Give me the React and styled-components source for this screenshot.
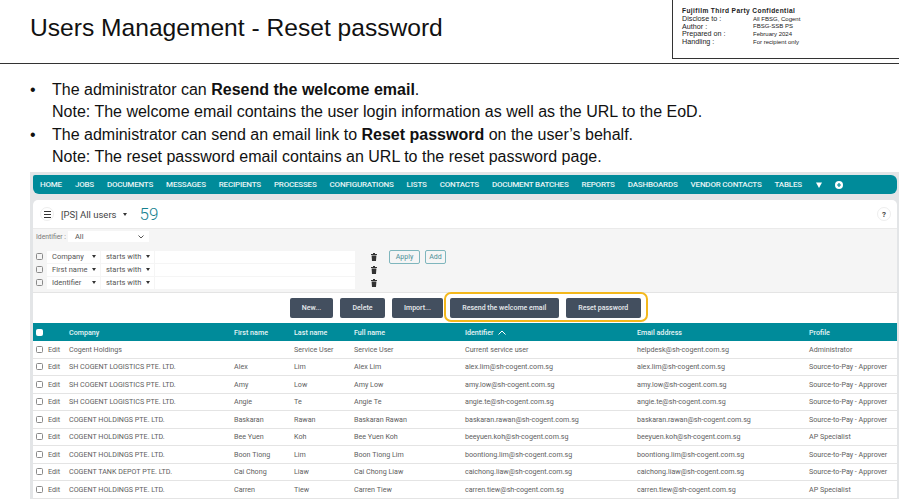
//dependencies
import React from 'react';
import styled, { createGlobalStyle } from 'styled-components';

const GlobalStyle = createGlobalStyle`
  html, body {
    margin: 0;
    padding: 0;
    height: 499px;
    overflow: hidden;
    background: #ffffff;
    font-family: "Liberation Sans", Arial, sans-serif;
  }
`;

const Slide = styled.div`
  width: 899px;
  height: 499px;
  overflow: hidden;
`;

const Header = styled.header`
  height: 63px;
  display: flex;
  justify-content: space-between;
  border-bottom: 1px solid #333;
`;

const Title = styled.h1`
  margin: 0;
  padding: 14px 0 0 30px;
  font-size: 24.6px;
  line-height: 28px;
  font-weight: 400;
  color: #111;
`;

const Confidential = styled.div`
  width: 227px;
  height: 59px;
  box-sizing: border-box;
  padding: 7px 0 0 9px;
  border-left: 1px solid #333;
  border-bottom: 1px solid #333;
  color: #222;
`;

const ConfTitle = styled.div`
  font-weight: 700;
  font-size: 6.6px;
  line-height: 7px;
  letter-spacing: 0.4px;
`;

const ConfRow = styled.div`
  display: grid;
  grid-template-columns: 71px 1fr;
  align-items: center;
  height: 7.7px;
  font-size: 7.2px;
`;

const ConfValue = styled.span`
  font-size: 6px;
`;

const Bullets = styled.ul`
  margin: 0;
  padding: 15px 0 0 30px;
  list-style: none;
  height: 108px;
  box-sizing: border-box;
`;

const Bullet = styled.li`
  display: grid;
  grid-template-columns: 22px 1fr;
  font-size: 16px;
  line-height: 22.4px;
  color: #111;
`;

const Panel = styled.section`
  position: relative;
  margin-left: 30px;
  height: 327px;
  padding: 3px 2px 0 3px;
  background: #e3e5e7;
`;

const Nav = styled.nav`
  height: 19px;
  display: flex;
  align-items: center;
  gap: 13px;
  padding-left: 7px;
  background: #008b9a;
  border-radius: 2px 6px 6px 6px;
  font-family: Roboto, sans-serif;
  font-size: 8px;
  font-weight: 500;
  letter-spacing: -0.2px;
  color: #e6f4f5;
  white-space: nowrap;
`;

const NavIcon = styled.svg`
  flex: none;
  margin-left: ${props => props.$ml}px;
`;

const ViewBar = styled.div`
  margin-top: 6px;
  height: 28px;
  display: flex;
  align-items: center;
  background: #fff;
  border-radius: 5px 5px 0 0;
  padding: 0 6px 0 7px;
  font-family: Roboto, sans-serif;
`;

const RoundButton = styled.span`
  width: 14px;
  height: 14px;
  box-sizing: border-box;
  border-radius: 50%;
  border: 1px solid #eee;
  display: flex;
  align-items: center;
  justify-content: center;
  font-size: 8px;
  font-weight: 700;
  color: #444;
`;

const ViewName = styled.span`
  margin-left: 7px;
  font-size: 9.5px;
  color: #444;
`;

const Caret = styled.span`
  flex: none;
  margin-left: ${props => props.$ml || 0}px;
  width: 0;
  height: 0;
  border-left: 2.5px solid transparent;
  border-right: 2.5px solid transparent;
  border-top: 3px solid #333;
`;

const Count = styled.span`
  margin-left: 13px;
  font-size: 17px;
  font-weight: 300;
  color: #14808e;
`;

const Help = styled(RoundButton)`
  margin-left: auto;
`;

const Filters = styled.div`
  height: 65px;
  box-sizing: border-box;
  background: #f5f5f5;
  border-top: 1px solid #eaeaea;
  border-bottom: 1px solid #e4e4e4;
  padding: 2px 0 0 3px;
  font-family: Roboto, sans-serif;
  font-size: 7.5px;
  color: #555;
`;

const IdentifierRow = styled.div`
  display: flex;
  align-items: center;
  height: 11px;
  font-size: 6.8px;
  color: #777;
`;

const IdentifierSelect = styled.span`
  width: 81px;
  height: 11px;
  margin-left: 2px;
  padding: 0 5px 0 7px;
  box-sizing: border-box;
  display: flex;
  align-items: center;
  justify-content: space-between;
  background: #fff;
  font-size: 7.5px;
  color: #555;
`;

const FilterArea = styled.div`
  margin-top: 9px;
  display: flex;
  align-items: flex-start;
`;

const FilterRows = styled.div`
  display: flex;
  flex-direction: column;
  gap: 1.5px;
`;

const FilterRow = styled.div`
  height: 11.5px;
  display: flex;
  align-items: center;
`;

const Check = styled.span`
  width: 7px;
  height: 7px;
  box-sizing: border-box;
  flex: none;
  border: 1px solid ${props => (props.$filled ? '#fff' : '#8a8a8a')};
  border-radius: 1.5px;
  background: ${props => (props.$filled ? '#fff' : 'transparent')};
`;

const FilterSelect = styled.span`
  width: 53px;
  height: 100%;
  margin-left: ${props => props.$ml}px;
  padding: 0 4px 0 5px;
  box-sizing: border-box;
  display: flex;
  align-items: center;
  justify-content: space-between;
  white-space: nowrap;
  background: #fff;
`;

const FilterInput = styled.span`
  width: 200px;
  height: 100%;
  margin-left: 1px;
  background: #fff;
`;

const TrashIcons = styled.div`
  margin-left: 16px;
  display: flex;
  flex-direction: column;
  gap: 1.5px;
`;

const TrashSlot = styled.span`
  height: 11.5px;
  display: flex;
  align-items: center;
`;

const OutlineButton = styled.span`
  margin: -1px 0 0 ${props => props.$ml}px;
  width: ${props => props.$w}px;
  height: 14px;
  box-sizing: border-box;
  display: flex;
  align-items: center;
  justify-content: center;
  border: 1px solid #7fb6bd;
  border-radius: 2px;
  color: #4d8f98;
  font-size: 7px;
`;

const Actions = styled.div`
  height: 30px;
  box-sizing: border-box;
  background: #fff;
  display: flex;
  align-items: center;
  padding-left: 257px;
  gap: 7px;
`;

const ActionButton = styled.span`
  height: 19.5px;
  width: ${props => props.$w}px;
  display: flex;
  align-items: center;
  justify-content: center;
  border-radius: 2px;
  background: #434f5f;
  color: #e8ebee;
  font-family: Roboto, sans-serif;
  font-size: 7px;
  font-weight: 500;
`;

const Highlight = styled.div`
  position: absolute;
  left: 414px;
  top: 120px;
  width: 204px;
  height: 30px;
  box-sizing: border-box;
  border: 2.5px solid #f4b81c;
  border-radius: 7px;
`;

const Table = styled.div`
  font-family: Roboto, sans-serif;
  font-size: 7.15px;
  color: #606060;
`;

const columns = '12px 21px 165px 60px 60px 111px 172px 172px 1fr';

const HeadRow = styled.div`
  height: 18px;
  display: grid;
  grid-template-columns: ${columns};
  align-items: center;
  background: #008b9a;
  color: #e6f4f5;
  font-weight: 500;
  padding-left: 3px;
`;

const Row = styled.div`
  height: 17.5px;
  box-sizing: border-box;
  display: grid;
  grid-template-columns: ${columns};
  align-items: center;
  background: #fff;
  border-bottom: 1px solid #e4e4e4;
  padding-left: 3px;
  white-space: nowrap;
`;

const SortArrow = styled.svg`
  width: 8px;
  height: 5px;
  margin-left: 4px;
`;

const Hamburger = () => (
  <svg width="7" height="7" viewBox="0 0 7 7">
    <path d="M0 .5h7M0 3.5h7M0 6.5h7" stroke="#333" strokeWidth="1" />
  </svg>
);

const Trash = () => (
  <svg width="6" height="8" viewBox="0 0 6 8">
    <path d="M2 0h2v1h2v1H0V1h2zM.6 2.5h4.8L5 8H1z" fill="#333" />
  </svg>
);

const Chevron = () => (
  <svg width="6" height="4" viewBox="0 0 6 4">
    <path d="M.5.5 3 3 5.5.5" fill="none" stroke="#555" />
  </svg>
);

const navItems = ['HOME', 'JOBS', 'DOCUMENTS', 'MESSAGES', 'RECIPIENTS', 'PROCESSES', 'CONFIGURATIONS', 'LISTS', 'CONTACTS', 'DOCUMENT BATCHES', 'REPORTS', 'DASHBOARDS', 'VENDOR CONTACTS', 'TABLES'];

const filters = ['Company', 'First name', 'Identifier'];

const S2P = 'Source-to-Pay - Approver';
const SH = 'SH COGENT LOGISTICS PTE. LTD.';
const CH = 'COGENT HOLDINGS PTE. LTD.';

const users = [
  ['Cogent Holdings', '', 'Service User', 'Service User', 'Current service user', 'helpdesk@sh-cogent.com.sg', 'Administrator'],
  [SH, 'Alex', 'Lim', 'Alex Lim', 'alex.lim@sh-cogent.com.sg', 'alex.lim@sh-cogent.com.sg', S2P],
  [SH, 'Amy', 'Low', 'Amy Low', 'amy.low@sh-cogent.com.sg', 'amy.low@sh-cogent.com.sg', S2P],
  [SH, 'Angie', 'Te', 'Angie Te', 'angie.te@sh-cogent.com.sg', 'angie.te@sh-cogent.com.sg', S2P],
  [CH, 'Baskaran', 'Rawan', 'Baskaran Rawan', 'baskaran.rawan@sh-cogent.com.sg', 'baskaran.rawan@sh-cogent.com.sg', S2P],
  [CH, 'Bee Yuen', 'Koh', 'Bee Yuen Koh', 'beeyuen.koh@sh-cogent.com.sg', 'beeyuen.koh@sh-cogent.com.sg', 'AP Specialist'],
  [CH, 'Boon Tiong', 'Lim', 'Boon Tiong Lim', 'boontiong.lim@sh-cogent.com.sg', 'boontiong.lim@sh-cogent.com.sg', S2P],
  ['COGENT TANK DEPOT PTE. LTD.', 'Cai Chong', 'Liaw', 'Cai Chong Liaw', 'caichong.liaw@sh-cogent.com.sg', 'caichong.liaw@sh-cogent.com.sg', S2P],
  [CH, 'Carren', 'Tiew', 'Carren Tiew', 'carren.tiew@sh-cogent.com.sg', 'carren.tiew@sh-cogent.com.sg', 'AP Specialist'],
];

const App = () => (
  <Slide>
    <GlobalStyle />
    <Header>
      <Title>Users Management - Reset password</Title>
      <Confidential>
        <ConfTitle>Fujifilm Third Party Confidential</ConfTitle>
        <ConfRow><span>Disclose to :</span><ConfValue>All FBSG, Cogent</ConfValue></ConfRow>
        <ConfRow><span>Author :</span><ConfValue>FBSG-SSB PS</ConfValue></ConfRow>
        <ConfRow><span>Prepared on :</span><ConfValue>February 2024</ConfValue></ConfRow>
        <ConfRow><span>Handling :</span><ConfValue>For recipient only</ConfValue></ConfRow>
      </Confidential>
    </Header>
    <Bullets>
      <Bullet>
        <span>•</span>
        <span>The administrator can <b>Resend the welcome email</b>.<br />Note: The welcome email contains the user login information as well as the URL to the EoD.</span>
      </Bullet>
      <Bullet>
        <span>•</span>
        <span>The administrator can send an email link to <b>Reset password</b> on the user’s behalf.<br />Note: The reset password email contains an URL to the reset password page.</span>
      </Bullet>
    </Bullets>
    <Panel>
      <Nav>
        {navItems.map(item => <span key={item}>{item}</span>)}
        <NavIcon $ml={1} width="6" height="6" viewBox="0 0 6 6"><path d="M0 .5h6L3 6z" fill="#fff" /></NavIcon>
        <NavIcon $ml={0} width="8" height="8" viewBox="0 0 8 8"><circle cx="4" cy="4" r="4" fill="#fff" /><path d="M4 2v4M2 4h4" stroke="#008b9a" strokeWidth="1.2" /></NavIcon>
      </Nav>
      <ViewBar>
        <RoundButton><Hamburger /></RoundButton>
        <ViewName>[PS] All users</ViewName>
        <Caret $ml={6} />
        <Count>59</Count>
        <Help>?</Help>
      </ViewBar>
      <Filters>
        <IdentifierRow>
          Identifier :
          <IdentifierSelect>All <Chevron /></IdentifierSelect>
        </IdentifierRow>
        <FilterArea>
          <FilterRows>
            {filters.map(name => (
              <FilterRow key={name}>
                <Check />
                <FilterSelect $ml={4}>{name}<Caret /></FilterSelect>
                <FilterSelect $ml={1}>starts with<Caret /></FilterSelect>
                <FilterInput />
              </FilterRow>
            ))}
          </FilterRows>
          <TrashIcons>
            {filters.map(name => <TrashSlot key={name}><Trash /></TrashSlot>)}
          </TrashIcons>
          <OutlineButton $ml={12} $w={31}>Apply</OutlineButton>
          <OutlineButton $ml={5} $w={21}>Add</OutlineButton>
        </FilterArea>
      </Filters>
      <Actions>
        <ActionButton $w={43}>New...</ActionButton>
        <ActionButton $w={45}>Delete</ActionButton>
        <ActionButton $w={51}>Import...</ActionButton>
        <ActionButton $w={108.5}>Resend the welcome email</ActionButton>
        <ActionButton $w={75.5}>Reset password</ActionButton>
      </Actions>
      <Highlight />
      <Table>
        <HeadRow>
          <Check $filled />
          <span />
          <span>Company</span>
          <span>First name</span>
          <span>Last name</span>
          <span>Full name</span>
          <span>Identifier<SortArrow viewBox="0 0 8 5"><path d="M.5 4.5 4 1l3.5 3.5" fill="none" stroke="#fff" /></SortArrow></span>
          <span>Email address</span>
          <span>Profile</span>
        </HeadRow>
        {users.map(user => (
          <Row key={user[5]}>
            <Check />
            <span>Edit</span>
            {user.map((cell, i) => <span key={i}>{cell}</span>)}
          </Row>
        ))}
      </Table>
    </Panel>
  </Slide>
);

export default App;
